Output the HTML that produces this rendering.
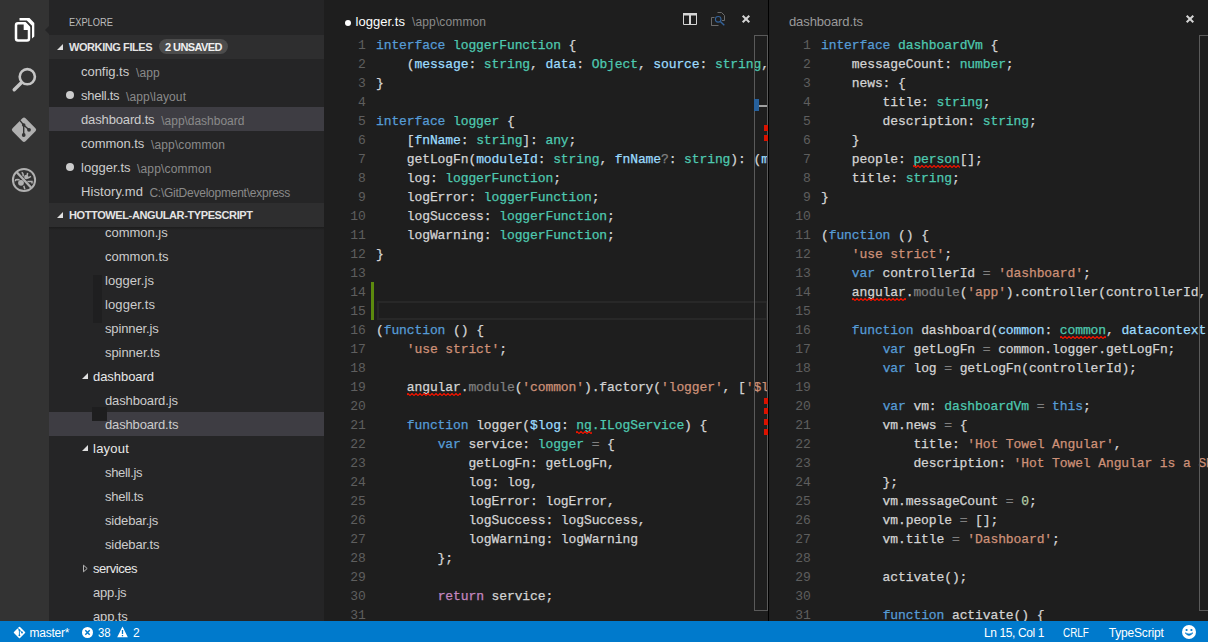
<!DOCTYPE html>
<html>
<head>
<meta charset="utf-8">
<title>Visual Studio Code</title>
<style>
*{box-sizing:border-box;margin:0;padding:0}
html,body{width:1208px;height:642px;overflow:hidden;background:#1e1e1e}
body{position:relative;font-family:"Liberation Sans",sans-serif;font-size:13px;color:#ccc}
.abs{position:absolute}
svg{position:absolute;overflow:visible}
.ln svg{overflow:hidden}
#act{left:0;top:0;width:49px;height:621px;background:#333}
#side{left:49px;top:0;width:275px;height:621px;background:#252526;overflow:hidden}
#status{left:0;top:621px;width:1208px;height:21px;background:#007acc;color:#fff;font-size:12px}
#status div{position:absolute;top:5px;white-space:nowrap;line-height:14px}
.hdr{position:absolute;left:0;width:275px;height:24px;background:#2e2e2f;color:#e4e4e4;font-weight:bold;font-size:11px;line-height:24px;padding-left:20px;white-space:nowrap}
.tri{position:absolute;width:0;height:0;border-style:solid;border-width:0 0 6px 6px;border-color:transparent transparent #e0e0e0 transparent}
.tric{position:absolute;width:0;height:0;border-style:solid;border-width:4px 0 4px 5px;border-color:transparent transparent transparent #bbb}
.badge{position:absolute;left:110px;top:4px;width:69px;height:15px;border-radius:8px;background:#4c4c4c;color:#f0f0f0;line-height:17px;text-align:center;padding:0}
.row{position:absolute;left:0;width:275px;height:24px;line-height:25px;white-space:nowrap;color:#ccc;font-size:13px}
.row.sel{background:#3e3d43}
.row.f{color:#e8e8e8}
.row .d{color:#8a8a8a;font-size:12px;position:absolute;top:2px}
.dot{position:absolute;left:17px;top:8px;width:8px;height:8px;border-radius:4px;background:#ccc}
.ed{position:absolute;top:0;height:621px;background:#1e1e1e;overflow:hidden}
.ttl{position:absolute;top:14px;font-size:13px;white-space:nowrap;line-height:16px}
.code{position:absolute;left:0;top:36px;width:100%;font-family:"Liberation Mono",monospace;font-size:13px;letter-spacing:-0.1px;color:#d4d4d4}
.ln{height:19px;line-height:19px;position:relative}
.no{position:absolute;left:0;width:41.6px;text-align:right;color:#5e5e5e}
.cd{position:absolute;left:52px;white-space:pre;-webkit-text-stroke:0.25px}
.k{color:#569cd6}.t{color:#4ec9b0}.s{color:#ce9178}.p{color:#9cdcfe}.g{color:#808080}.r{color:#c586c0}.n{color:#b5cea8}
.ruler{position:absolute;top:35px;width:14px;height:576px;border:1px solid #5a5a5a}
</style>
</head>
<body>
<div id="act" class="abs">
  <svg style="left:0;top:0" width="49" height="210" viewBox="0 0 49 210">
    <!-- explorer (files) -->
    <path d="M19.5 18L29.5 18L34.3 23L34.3 36.5L32 38.5L32 25.8L26.8 20.6L19.5 20.6Z" fill="#fff"/>
    <path d="M16 25.2Q16 23.2 18 23.2L25 23.2L29 27.4L29 38.5Q29 40.5 27 40.5L18 40.5Q16 40.5 16 38.5Z" fill="none" stroke="#fff" stroke-width="2.5" stroke-linejoin="round"/>
    <path d="M23.7 22.4L25.6 22.4L30 27.2L30 30L23.7 30Z" fill="#fff"/>
    <!-- search -->
    <circle cx="27.3" cy="76.7" r="7.6" fill="none" stroke="#c5c5c5" stroke-width="2.6"/>
    <path d="M21.3 82.7L14.2 89.8" stroke="#c5c5c5" stroke-width="3.4" stroke-linecap="round"/>
    <!-- git -->
    <rect x="14.8" y="120.6" width="18.4" height="18.4" rx="2.2" transform="rotate(45 24 129.8)" fill="#b0b0b0"/>
    <path d="M19.8 120.4L23.7 125L29 129.8M23.7 125L23.7 135" stroke="#333" stroke-width="1.4" fill="none"/>
    <circle cx="23.7" cy="125" r="1.8" fill="#333"/><circle cx="29" cy="129.8" r="1.9" fill="#333"/><circle cx="23.7" cy="135" r="1.9" fill="#333"/>
    <!-- debug -->
    <circle cx="24" cy="180" r="11.1" fill="none" stroke="#b0b0b0" stroke-width="2"/>
    <path d="M16.5 172L31.5 188" stroke="#b0b0b0" stroke-width="2.4"/>
    <circle cx="21" cy="182.8" r="2.9" fill="#b0b0b0"/>
    <circle cx="26.3" cy="177" r="2.2" fill="#b0b0b0"/>
    <path d="M15.2 181.2Q15.2 179.6 17 179.6L19.6 179.8M21.6 172.4Q23.4 173 23.2 176.4M27.6 172.8L27.2 175.4M28 178L31 176.4M27.4 181.6L32 181.6L32 183.4M23.8 185.8L24.8 189.2" stroke="#b0b0b0" stroke-width="1.5" fill="none"/>
  </svg>

  <div class="abs" style="left:45px;top:26px;width:0;height:0;border-style:solid;border-width:4px 4px 4px 0;border-color:transparent #252526 transparent transparent"></div>
</div>
<div id="side" class="abs">
  <div class="abs" style="left:20px;top:16px;font-size:11px;color:#bcbcbc;line-height:13px;white-space:nowrap"><span style="display:inline-block;transform:scaleX(0.845);transform-origin:0 0">EXPLORE</span></div>
  <div class="hdr" style="top:35px"><i class="tri" style="left:8px;top:9px"></i><span style="letter-spacing:-0.42px">WORKING FILES</span><span class="badge"><span style="letter-spacing:-0.58px">2 UNSAVED</span></span></div>
  <div class="row" style="top:59px;padding-left:32px"><span style="letter-spacing:-0.03px">config.ts</span><span class="d" style="left:87.0px"><span style="letter-spacing:0.11px">\app</span></span></div>
  <div class="row" style="top:83px;padding-left:32px"><i class="dot"></i><span style="letter-spacing:-0.27px">shell.ts</span><span class="d" style="left:77.0px"><span style="letter-spacing:0.13px">\app\layout</span></span></div>
  <div class="row sel" style="top:107px;padding-left:32px"><span style="letter-spacing:-0.14px">dashboard.ts</span><span class="d" style="left:112.3px"><span style="letter-spacing:-0.03px">\app\dashboard</span></span></div>
  <div class="row" style="top:131px;padding-left:32px"><span style="letter-spacing:-0.03px">common.ts</span><span class="d" style="left:102.0px"><span style="letter-spacing:0.13px">\app\common</span></span></div>
  <div class="row" style="top:155px;padding-left:32px"><i class="dot"></i><span style="letter-spacing:0.06px">logger.ts</span><span class="d" style="left:88.0px"><span style="letter-spacing:0.18px">\app\common</span></span></div>
  <div class="row" style="top:179px;padding-left:32px"><span style="letter-spacing:0.09px">History.md</span><span class="d" style="left:100.4px"><span style="letter-spacing:-0.24px">C:\GitDevelopment\express</span></span></div>

  <div id="tree" class="abs" style="left:0;top:227px;width:275px;height:394px;overflow:hidden">
    <div class="row" style="top:-7px;padding-left:56px"><span style="letter-spacing:-0.02px">common.js</span></div>
    <div class="row" style="top:17px;padding-left:56px"><span style="letter-spacing:0.00px">common.ts</span></div>
    <div class="row" style="top:41px;padding-left:56px"><span style="letter-spacing:0.06px">logger.js</span></div>
    <div class="row" style="top:65px;padding-left:56px"><span style="letter-spacing:0.11px">logger.ts</span></div>
    <div class="row" style="top:89px;padding-left:56px"><span style="letter-spacing:-0.14px">spinner.js</span></div>
    <div class="row" style="top:113px;padding-left:56px"><span style="letter-spacing:-0.07px">spinner.ts</span></div>
    <div class="row f" style="top:137px;padding-left:44px"><i class="tri" style="left:33px;top:9px"></i><span style="letter-spacing:-0.05px">dashboard</span></div>
    <div class="row" style="top:161px;padding-left:56px"><span style="letter-spacing:-0.14px">dashboard.js</span></div>
    <div class="row sel" style="top:185px;padding-left:56px"><span style="letter-spacing:-0.15px">dashboard.ts</span></div>
    <div class="row f" style="top:209px;padding-left:44px"><i class="tri" style="left:33px;top:9px"></i><span style="letter-spacing:0.24px">layout</span></div>
    <div class="row" style="top:233px;padding-left:56px"><span style="letter-spacing:-0.32px">shell.js</span></div>
    <div class="row" style="top:257px;padding-left:56px"><span style="letter-spacing:-0.27px">shell.ts</span></div>
    <div class="row" style="top:281px;padding-left:56px"><span style="letter-spacing:-0.18px">sidebar.js</span></div>
    <div class="row" style="top:305px;padding-left:56px"><span style="letter-spacing:-0.13px">sidebar.ts</span></div>
    <div class="row f" style="top:329px;padding-left:44px"><svg style="left:34px;top:8px" width="6" height="9" viewBox="0 0 6 9"><path d="M0.5 1.2L4.2 4.5L0.5 7.8Z" fill="none" stroke="#b4b4b4" stroke-width="1"/></svg><span style="letter-spacing:-0.45px">services</span></div>
    <div class="row" style="top:353px;padding-left:44px"><span style="letter-spacing:-0.22px">app.js</span></div>
    <div class="row" style="top:377px;padding-left:44px"><span style="letter-spacing:-0.14px">app.ts</span></div>

    <div class="abs" style="left:44px;top:48px;width:9px;height:48px;background:#1f1f20"></div>
    <div class="abs" style="left:43px;top:180px;width:15px;height:14px;background:#1e1e1f"></div>
    <div class="abs" style="left:0;top:0;width:275px;height:3px;background:linear-gradient(#1c1c1c,#252526)"></div>
  </div>
  <div class="hdr" style="top:203px"><i class="tri" style="left:8px;top:9px"></i><span style="letter-spacing:-0.39px">HOTTOWEL-ANGULAR-TYPESCRIPT</span></div>
</div>
<div id="ed1" class="ed" style="left:324px;width:444px">
  <div class="abs" style="left:21px;top:20px;width:6px;height:6px;border-radius:3px;background:#fff"></div>
  <div class="ttl" style="left:31.5px;color:#fff"><span style="letter-spacing:0.03px">logger.ts</span></div>
  <div class="ttl" style="left:88px;color:#8a8a8a;font-size:12px"><span style="letter-spacing:0.13px">\app\common</span></div>
  <svg style="left:359px;top:13px" width="14" height="12" viewBox="0 0 14 12"><path d="M0.5 1.5H13.5V11.5H0.5Z M7 2V11.5" fill="none" stroke="#d4d4d4" stroke-width="1"/><rect x="0" y="0" width="14" height="2.5" fill="#d4d4d4"/><rect x="6" y="2" width="2" height="10" fill="#d4d4d4"/></svg>
  <svg style="left:387px;top:12px" width="14" height="14" viewBox="0 0 14 14"><path d="M6.5 0.5H10.5L13.5 3.5V8.5H11M7.5 13.5H0.5V5.5H3.5M0.5 10V13.5" fill="none" stroke="#6a6a6a" stroke-width="1"/><circle cx="7.2" cy="7.3" r="2.8" fill="none" stroke="#34639a" stroke-width="1.1"/><path d="M9.3 9.5L13.3 13.3" stroke="#34639a" stroke-width="1.4"/></svg>
  <svg style="left:418px;top:15px" width="8" height="8" viewBox="0 0 8 8"><path d="M0.7 0.7L7.3 7.3M7.3 0.7L0.7 7.3" stroke="#d4d4d4" stroke-width="2" fill="none"/></svg>

  <div class="abs" style="left:47px;top:282px;width:3px;height:38px;background:#5c8a0e"></div>
  <div class="abs" style="left:53px;top:301px;width:391px;height:19px;border:2px solid #282828"></div>
  <div class="code">
<div class="ln"><span class="no">1</span><span class="cd"><span class="k">interface</span> <span class="t">loggerFunction</span> {</span></div>
<div class="ln"><span class="no">2</span><span class="cd">    (<span class="p">message</span>: <span class="t">string</span>, <span class="p">data</span>: <span class="t">Object</span>, <span class="p">source</span>: <span class="t">string</span>, <span class="p">showToast</span>: <span class="t">boolean</span>): <span class="t">void</span>;</span></div>
<div class="ln"><span class="no">3</span><span class="cd">}</span></div>
<div class="ln"><span class="no">4</span><span class="cd"></span></div>
<div class="ln"><span class="no">5</span><span class="cd"><span class="k">interface</span> <span class="t">logger</span> {</span></div>
<div class="ln"><span class="no">6</span><span class="cd">    [<span class="p">fnName</span>: <span class="t">string</span>]: <span class="t">any</span>;</span></div>
<div class="ln"><span class="no">7</span><span class="cd">    getLogFn(<span class="p">moduleId</span>: <span class="t">string</span>, <span class="p">fnName</span><span class="g">?</span>: <span class="t">string</span>): (<span class="p">message</span>: <span class="t">string</span>, <span class="p">data</span>: <span class="t">Object</span>) <span class="g">=&gt;</span> <span class="t">void</span>;</span></div>
<div class="ln"><span class="no">8</span><span class="cd">    log: <span class="t">loggerFunction</span>;</span></div>
<div class="ln"><span class="no">9</span><span class="cd">    logError: <span class="t">loggerFunction</span>;</span></div>
<div class="ln"><span class="no">10</span><span class="cd">    logSuccess: <span class="t">loggerFunction</span>;</span></div>
<div class="ln"><span class="no">11</span><span class="cd">    logWarning: <span class="t">loggerFunction</span>;</span></div>
<div class="ln"><span class="no">12</span><span class="cd">}</span></div>
<div class="ln"><span class="no">13</span><span class="cd"></span></div>
<div class="ln"><span class="no">14</span><span class="cd"></span></div>
<div class="ln"><span class="no">15</span><span class="cd"></span></div>
<div class="ln"><span class="no">16</span><span class="cd">(<span class="k">function</span> () {</span></div>
<div class="ln"><span class="no">17</span><span class="cd">    <span class="s">'use strict'</span>;</span></div>
<div class="ln"><span class="no">18</span><span class="cd"></span></div>
<div class="ln"><span class="no">19</span><span class="cd">    angular.<span class="g">module</span>(<span class="s">'common'</span>).factory(<span class="s">'logger'</span>, [<span class="s">'$log'</span>, logger]);</span><svg style="left:82.8px;top:15px" width="53.9" height="3" viewBox="0 0 53.9 3"><path d="M-1 2.6L1 0.4L3 2.6L5 0.4L7 2.6L9 0.4L11 2.6L13 0.4L15 2.6L17 0.4L19 2.6L21 0.4L23 2.6L25 0.4L27 2.6L29 0.4L31 2.6L33 0.4L35 2.6L37 0.4L39 2.6L41 0.4L43 2.6L45 0.4L47 2.6L49 0.4L51 2.6L53 0.4L55 2.6" fill="none" stroke="#e81400" stroke-width="1.2" stroke-linejoin="round"/></svg></div>
<div class="ln"><span class="no">20</span><span class="cd"></span></div>
<div class="ln"><span class="no">21</span><span class="cd">    <span class="k">function</span> logger(<span class="p">$log</span>: <span class="t">ng</span><span class="t">.ILogService</span>) {</span><svg style="left:252.2px;top:15px" width="15.4" height="3" viewBox="0 0 15.4 3"><path d="M-1 2.6L1 0.4L3 2.6L5 0.4L7 2.6L9 0.4L11 2.6L13 0.4L15 2.6L17 0.4" fill="none" stroke="#e81400" stroke-width="1.2" stroke-linejoin="round"/></svg></div>
<div class="ln"><span class="no">22</span><span class="cd">        <span class="k">var</span> service: <span class="t">logger</span> <span class="g">=</span> {</span></div>
<div class="ln"><span class="no">23</span><span class="cd">            getLogFn: getLogFn,</span></div>
<div class="ln"><span class="no">24</span><span class="cd">            log: log,</span></div>
<div class="ln"><span class="no">25</span><span class="cd">            logError: logError,</span></div>
<div class="ln"><span class="no">26</span><span class="cd">            logSuccess: logSuccess,</span></div>
<div class="ln"><span class="no">27</span><span class="cd">            logWarning: logWarning</span></div>
<div class="ln"><span class="no">28</span><span class="cd">        };</span></div>
<div class="ln"><span class="no">29</span><span class="cd"></span></div>
<div class="ln"><span class="no">30</span><span class="cd">        <span class="r">return</span> service;</span></div>
<div class="ln"><span class="no">31</span><span class="cd"></span></div>
  </div>
  <div class="ruler" style="left:430px">
    <div class="abs" style="left:-1px;top:63px;width:5px;height:12px;background:#26609c"></div>
    <div class="abs" style="left:4px;top:69px;width:8px;height:2px;background:#a0a0a0"></div>
    <div class="abs" style="left:9px;top:89px;width:3.5px;height:6px;background:#d91200"></div>
    <div class="abs" style="left:9px;top:99px;width:3.5px;height:6px;background:#d91200"></div>
    <div class="abs" style="left:9px;top:362px;width:3.5px;height:6px;background:#d91200"></div>
    <div class="abs" style="left:9px;top:372px;width:3.5px;height:6px;background:#d91200"></div>
    <div class="abs" style="left:9px;top:383px;width:3.5px;height:6px;background:#d91200"></div>
    <div class="abs" style="left:9px;top:393px;width:3.5px;height:6px;background:#d91200"></div>
  </div>
</div>
<div class="abs" style="left:768px;top:0;width:1px;height:621px;background:#000"></div>
<div id="ed2" class="ed" style="left:769px;width:439px">
  <div class="ttl" style="left:20px;color:#9a9a9a"><span style="letter-spacing:-0.11px">dashboard.ts</span></div>
  <svg style="left:417px;top:15px" width="8" height="8" viewBox="0 0 8 8"><path d="M0.7 0.7L7.3 7.3M7.3 0.7L0.7 7.3" stroke="#d4d4d4" stroke-width="2" fill="none"/></svg>
  <div class="code">
<div class="ln"><span class="no">1</span><span class="cd"><span class="k">interface</span> <span class="t">dashboardVm</span> {</span></div>
<div class="ln"><span class="no">2</span><span class="cd">    messageCount: <span class="t">number</span>;</span></div>
<div class="ln"><span class="no">3</span><span class="cd">    news: {</span></div>
<div class="ln"><span class="no">4</span><span class="cd">        title: <span class="t">string</span>;</span></div>
<div class="ln"><span class="no">5</span><span class="cd">        description: <span class="t">string</span>;</span></div>
<div class="ln"><span class="no">6</span><span class="cd">    }</span></div>
<div class="ln"><span class="no">7</span><span class="cd">    people: <span class="t">person</span>[];</span><svg style="left:144.4px;top:15px" width="46.2" height="3" viewBox="0 0 46.2 3"><path d="M-1 2.6L1 0.4L3 2.6L5 0.4L7 2.6L9 0.4L11 2.6L13 0.4L15 2.6L17 0.4L19 2.6L21 0.4L23 2.6L25 0.4L27 2.6L29 0.4L31 2.6L33 0.4L35 2.6L37 0.4L39 2.6L41 0.4L43 2.6L45 0.4L47 2.6" fill="none" stroke="#e81400" stroke-width="1.2" stroke-linejoin="round"/></svg></div>
<div class="ln"><span class="no">8</span><span class="cd">    title: <span class="t">string</span>;</span></div>
<div class="ln"><span class="no">9</span><span class="cd">}</span></div>
<div class="ln"><span class="no">10</span><span class="cd"></span></div>
<div class="ln"><span class="no">11</span><span class="cd">(<span class="k">function</span> () {</span></div>
<div class="ln"><span class="no">12</span><span class="cd">    <span class="s">'use strict'</span>;</span></div>
<div class="ln"><span class="no">13</span><span class="cd">    <span class="k">var</span> controllerId <span class="g">=</span> <span class="s">'dashboard'</span>;</span></div>
<div class="ln"><span class="no">14</span><span class="cd">    angular.<span class="g">module</span>(<span class="s">'app'</span>).controller(controllerId, [<span class="s">'common'</span>, <span class="s">'datacontext'</span>, dashboard]);</span><svg style="left:82.8px;top:15px" width="53.9" height="3" viewBox="0 0 53.9 3"><path d="M-1 2.6L1 0.4L3 2.6L5 0.4L7 2.6L9 0.4L11 2.6L13 0.4L15 2.6L17 0.4L19 2.6L21 0.4L23 2.6L25 0.4L27 2.6L29 0.4L31 2.6L33 0.4L35 2.6L37 0.4L39 2.6L41 0.4L43 2.6L45 0.4L47 2.6L49 0.4L51 2.6L53 0.4L55 2.6" fill="none" stroke="#e81400" stroke-width="1.2" stroke-linejoin="round"/></svg></div>
<div class="ln"><span class="no">15</span><span class="cd"></span></div>
<div class="ln"><span class="no">16</span><span class="cd">    <span class="k">function</span> dashboard(<span class="p">common</span>: <span class="t">common</span>, <span class="p">datacontext</span>: <span class="t">datacontext</span>) {</span><svg style="left:290.7px;top:15px" width="46.2" height="3" viewBox="0 0 46.2 3"><path d="M-1 2.6L1 0.4L3 2.6L5 0.4L7 2.6L9 0.4L11 2.6L13 0.4L15 2.6L17 0.4L19 2.6L21 0.4L23 2.6L25 0.4L27 2.6L29 0.4L31 2.6L33 0.4L35 2.6L37 0.4L39 2.6L41 0.4L43 2.6L45 0.4L47 2.6" fill="none" stroke="#e81400" stroke-width="1.2" stroke-linejoin="round"/></svg></div>
<div class="ln"><span class="no">17</span><span class="cd">        <span class="k">var</span> getLogFn <span class="g">=</span> common.logger.getLogFn;</span></div>
<div class="ln"><span class="no">18</span><span class="cd">        <span class="k">var</span> log <span class="g">=</span> getLogFn(controllerId);</span></div>
<div class="ln"><span class="no">19</span><span class="cd"></span></div>
<div class="ln"><span class="no">20</span><span class="cd">        <span class="k">var</span> vm: <span class="t">dashboardVm</span> <span class="g">=</span> <span class="k">this</span>;</span></div>
<div class="ln"><span class="no">21</span><span class="cd">        vm.news <span class="g">=</span> {</span></div>
<div class="ln"><span class="no">22</span><span class="cd">            title: <span class="s">'Hot Towel Angular'</span>,</span></div>
<div class="ln"><span class="no">23</span><span class="cd">            description: <span class="s">'Hot Towel Angular is a SPA template for Angular developers.'</span></span></div>
<div class="ln"><span class="no">24</span><span class="cd">        };</span></div>
<div class="ln"><span class="no">25</span><span class="cd">        vm.messageCount <span class="g">=</span> <span class="n">0</span>;</span></div>
<div class="ln"><span class="no">26</span><span class="cd">        vm.people <span class="g">=</span> [];</span></div>
<div class="ln"><span class="no">27</span><span class="cd">        vm.title <span class="g">=</span> <span class="s">'Dashboard'</span>;</span></div>
<div class="ln"><span class="no">28</span><span class="cd"></span></div>
<div class="ln"><span class="no">29</span><span class="cd">        activate();</span></div>
<div class="ln"><span class="no">30</span><span class="cd"></span></div>
<div class="ln"><span class="no">31</span><span class="cd">        <span class="k">function</span> activate() {</span></div>
  </div>
  <div class="ruler" style="left:430px"></div>
</div>
<div id="status" class="abs">
  <svg style="left:13px;top:5px" width="13" height="13" viewBox="0 0 13 13"><rect x="2.2" y="2.2" width="8.6" height="8.6" rx="0.8" transform="rotate(45 6.5 6.5)" fill="#fff"/><path d="M4.3 1.6L6.4 4L9.2 6.5M6.4 4L6.4 9.4" stroke="#007acc" stroke-width="0.9" fill="none"/><circle cx="6.4" cy="4.1" r="0.9" fill="#007acc"/><circle cx="9" cy="6.5" r="0.9" fill="#007acc"/><circle cx="6.4" cy="9.3" r="0.9" fill="#007acc"/></svg>
  <div style="left:29.4px"><span style="letter-spacing:-0.21px">master*</span></div>
  <svg style="left:82px;top:6px" width="11" height="11" viewBox="0 0 11 11"><circle cx="5.5" cy="5.5" r="5.5" fill="#fff"/><path d="M3.3 3.3L7.7 7.7M7.7 3.3L3.3 7.7" stroke="#007acc" stroke-width="1.5"/></svg>
  <div style="left:98px"><span style="display:inline-block;transform:scaleX(0.944);transform-origin:0 0">38</span></div>
  <svg style="left:117px;top:5px" width="11" height="12" viewBox="0 0 11 12"><path d="M5.5 0.5L10.8 11.3H0.2Z" fill="#fff"/><path d="M5.5 4V8M5.5 9V10.3" stroke="#007acc" stroke-width="1.3"/></svg>
  <div style="left:133px"><span style="letter-spacing:-0.67px">2</span></div>
  <div style="left:983.9px"><span style="letter-spacing:-0.37px">Ln 15, Col 1</span></div>
  <div style="left:1063.4px"><span style="display:inline-block;transform:scaleX(0.827);transform-origin:0 0">CRLF</span></div>
  <div style="left:1108.8px"><span style="letter-spacing:-0.19px">TypeScript</span></div>
  <svg style="left:1182px;top:4px" width="14" height="14" viewBox="0 0 14 14"><circle cx="7" cy="7" r="7" fill="#fff"/><circle cx="4.6" cy="5" r="1.1" fill="#007acc"/><circle cx="9.4" cy="5" r="1.1" fill="#007acc"/><path d="M3 7.8Q7 13 11 7.8Q7 10.2 3 7.8Z" fill="#007acc" stroke="#007acc" stroke-width="0.6"/></svg>

</div>
</body>
</html>
